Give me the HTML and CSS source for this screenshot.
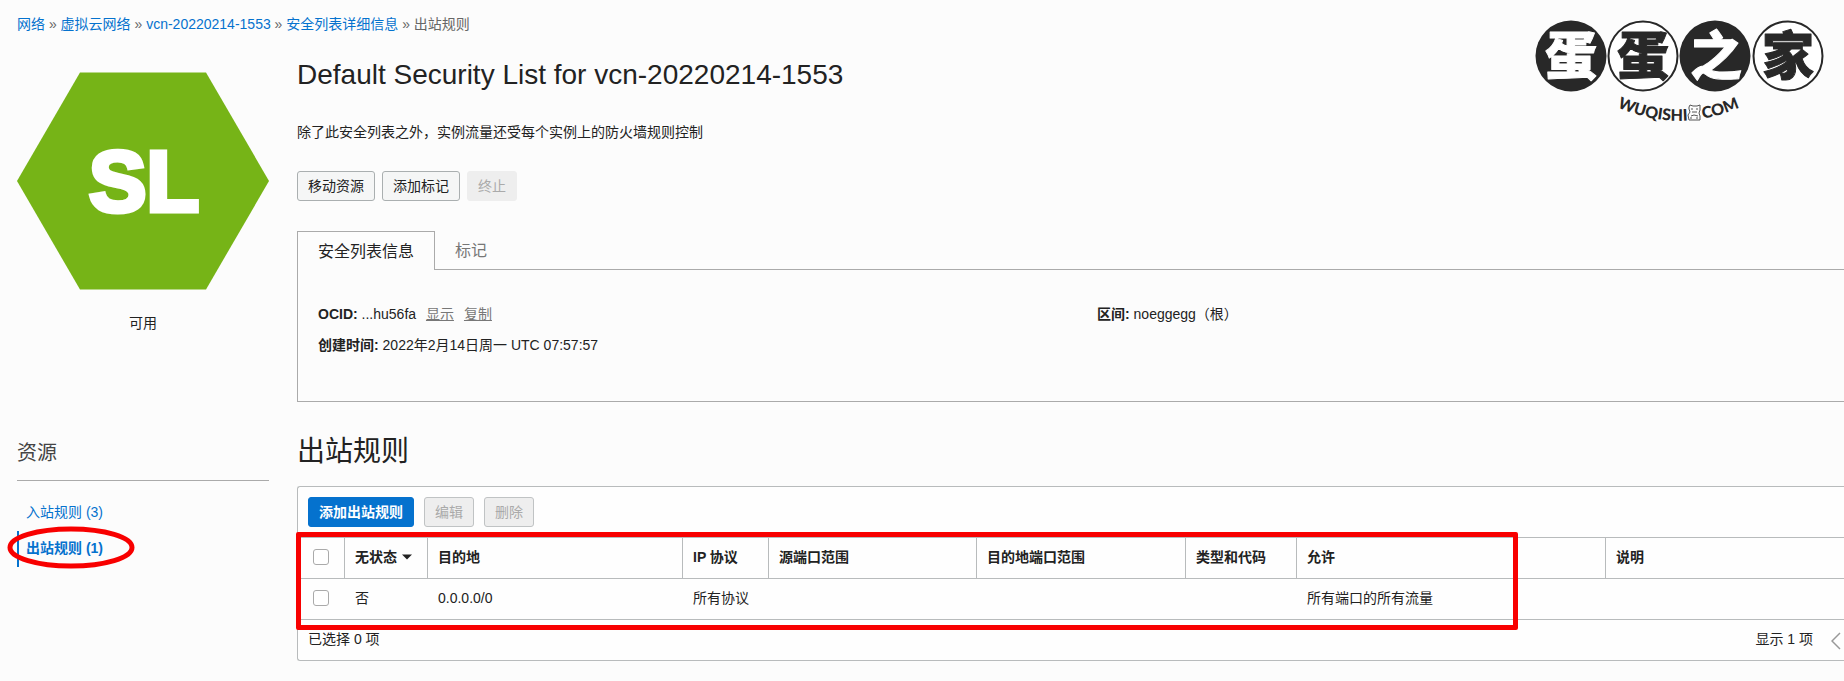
FILE: index.html
```html
<!DOCTYPE html>
<html lang="zh-CN">
<head>
  <meta charset="UTF-8" />
  <title>出站规则</title>
  <link rel="stylesheet" href="styles.css">
</head>
<body>

  <nav class="breadcrumb">
    <a href="#">网络</a> » <a href="#">虚拟云网络</a> » <a href="#">vcn-20220214-1553</a> » <a href="#">安全列表详细信息</a> » <span>出站规则</span>
  </nav>

  <div class="layout">
    <aside class="sidebar">
      <svg class="hexagon" viewBox="0 0 252 218">
        <polygon points="63,0.5 189,0.5 252,109 189,217.5 63,217.5 0,109" />
        <text x="127" y="139">SL</text>
      </svg>
      <div class="status">可用</div>

      <h3 class="resource-title">资源</h3>
      <ul class="resource-list">
        <li><a href="#">入站规则 (3)</a></li>
        <li class="active">
          <a href="#">出站规则 (1)</a>
          <svg class="mark-ellipse" viewBox="0 0 128 43">
            <ellipse cx="64" cy="21.5" rx="61" ry="18.5" />
          </svg>
        </li>
      </ul>
    </aside>

    <main class="content">
      <h1>Default Security List for vcn-20220214-1553</h1>
      <p class="description">除了此安全列表之外，实例流量还受每个实例上的防火墙规则控制</p>

      <div class="actions">
        <button type="button" class="btn">移动资源</button>
        <button type="button" class="btn">添加标记</button>
        <button type="button" class="btn btn-plain" disabled>终止</button>
      </div>

      <div class="tabs" role="tablist">
        <button type="button" class="tab active" role="tab" aria-selected="true">安全列表信息</button>
        <button type="button" class="tab" role="tab" aria-selected="false">标记</button>
      </div>
      <div class="panel">
        <div class="panel-col">
          <div><b>OCID:</b> ...hu56fa <a href="#">显示</a><a href="#">复制</a></div>
          <div><b>创建时间:</b> 2022年2月14日周一 UTC 07:57:57</div>
        </div>
        <div class="panel-col">
          <div><b>区间:</b> noeggegg（根）</div>
        </div>
      </div>

      <h2>出站规则</h2>
      <div class="rules">
        <div class="toolbar">
          <button type="button" class="btn btn-primary">添加出站规则</button>
          <button type="button" class="btn" disabled>编辑</button>
          <button type="button" class="btn" disabled>删除</button>
        </div>

        <div class="table-wrap">
          <table>
            <colgroup>
              <col class="col-check">
              <col class="col-stateless">
              <col class="col-dest">
              <col class="col-protocol">
              <col class="col-source-port">
              <col class="col-dest-port">
              <col class="col-type">
              <col class="col-allow">
              <col>
            </colgroup>
            <thead>
              <tr>
                <th class="check"><input type="checkbox" aria-label="全选"></th>
                <th>无状态<svg class="sort" viewBox="0 0 10 6"><path d="M0 0.5h10L5 5.5z" /></svg></th>
                <th>目的地</th>
                <th>IP 协议</th>
                <th>源端口范围</th>
                <th>目的地端口范围</th>
                <th>类型和代码</th>
                <th>允许</th>
                <th>说明</th>
              </tr>
            </thead>
            <tbody>
              <tr>
                <td class="check"><input type="checkbox" aria-label="选择"></td>
                <td>否</td>
                <td>0.0.0.0/0</td>
                <td>所有协议</td>
                <td></td>
                <td></td>
                <td></td>
                <td>所有端口的所有流量</td>
                <td></td>
              </tr>
            </tbody>
          </table>
          <div class="mark-box"></div>
        </div>

        <div class="table-footer">
          <span>已选择 0 项</span>
          <div class="pager">
            <span>显示 1 项</span>
            <svg viewBox="0 0 10 18"><path d="M9 1L1 9l8 8" /></svg>
          </div>
        </div>
      </div>
    </main>
  </div>

  <svg class="watermark" viewBox="0 -20 290 130">
    <circle class="dark" cx="36" cy="36" r="35.5" />
    <circle class="ring" cx="108" cy="36" r="34.5" />
    <circle class="dark" cx="180" cy="36" r="35.5" />
    <circle class="ring" cx="253" cy="36" r="34.5" />
    <text class="char light" x="36" y="55">蛋</text>
    <text class="char" x="108" y="55">蛋</text>
    <text class="char light" x="181" y="55">之</text>
    <text class="char" x="253" y="55">家</text>
    <path id="arc" class="arc" d="M82 87Q144 115 208 86" />
    <text class="site"><textPath href="#arc" startOffset="0">WUQISHI</textPath></text>
    <text class="site"><textPath href="#arc" startOffset="88">COM</textPath></text>
    <g class="cat">
      <path d="M154 87l1-2 3 1h4l3-1v5l-1 3 1 3v4h-11l-1-5 2-3-1-3z" />
      <path d="M156 89h2M161 89h2M157 92h5M156 96l3-1 4 1M156 99v-2M162 99v-2" />
    </g>
  </svg>

</body>
</html>
```

FILE: styles.css
```css
* {
  box-sizing: border-box;
}

body {
  margin: 0;
  padding: 14px 0 20px 17px;
  position: relative;
  overflow-x: hidden;
  background-color: #fcfcfc;
  color: #222;
  font-family: "Liberation Sans", "Noto Sans CJK SC", sans-serif;
  font-size: 14px;
  line-height: 20px;
}

h1, h2, h3, p, ul {
  margin: 0;
  padding: 0;
  font-weight: normal;
}

a {
  color: #0572ce;
  text-decoration: none;
}

button {
  font-family: inherit;
  cursor: pointer;
}

.breadcrumb {
  color: #666;
}

.layout {
  display: grid;
  grid-template-columns: 252px minmax(0, 1fr);
  column-gap: 28px;
  padding-top: 20px;
}

/* sidebar */
.hexagon {
  display: block;
  width: 100%;
  margin-top: 18px;
}

.hexagon polygon {
  fill: #76b417;
}

.hexagon text {
  fill: #fff;
  stroke: #fff;
  stroke-width: 5;
  font-size: 86px;
  font-weight: bold;
  text-anchor: middle;
}

.status {
  margin-top: 23px;
  text-align: center;
}

.resource-title {
  margin-top: 106px;
  padding-bottom: 13px;
  border-bottom: 1px solid #aaa;
  color: #444;
  font-size: 20px;
  line-height: 28px;
}

.resource-list {
  margin-top: 14px;
  list-style: none;
}

.resource-list li {
  position: relative;
  padding: 0 0 2px 9px;
  line-height: 34px;
}

.resource-list .active {
  padding-left: 7px;
  border-left: 2px solid #0572ce;
  font-weight: bold;
}

.mark-ellipse {
  position: absolute;
  top: -5px;
  left: -12px;
  width: 128px;
  height: 43px;
  pointer-events: none;
}

.mark-ellipse ellipse {
  fill: none;
  stroke: #f80000;
  stroke-width: 5;
}

/* content */
h1 {
  font-size: 28px;
  line-height: 42px;
}

.description {
  margin-top: 26px;
}

.actions {
  display: flex;
  gap: 7px;
  margin-top: 29px;
}

.btn {
  height: 30px;
  padding: 0 10px 2px;
  border: 1px solid #aaafb0;
  border-radius: 3px;
  background-color: #f5f6f6;
  color: #222;
  font-size: 14px;
}

.btn:disabled {
  border-color: #c0c3c4;
  background-color: #eee;
  color: #aaa;
  cursor: default;
}

.btn-plain:disabled {
  border-color: #eee;
}

.btn-primary {
  border-color: #0572ce;
  background-color: #0572ce;
  color: #fff;
  font-weight: bold;
}

.tabs {
  display: flex;
  margin-top: 30px;
}

.tab {
  height: 38px;
  padding: 0 20px 3px;
  border: none;
  background: none;
  color: #777;
  font-size: 16px;
}

.tab.active {
  height: 39px;
  margin-bottom: -1px;
  border: 1px solid #aaa;
  border-bottom: none;
  background-color: #fcfcfc;
  color: #222;
  position: relative;
}

.panel {
  display: grid;
  grid-template-columns: 1fr 1fr;
  column-gap: 32px;
  padding: 29px 0 40px 20px;
  border: 1px solid #aaa;
  border-right: none;
  line-height: 31px;
}

.panel-col a {
  margin-left: 6px;
  color: #777;
  text-decoration: underline;
}

.panel-col a + a {
  margin-left: 10px;
}

h2 {
  margin-top: 30px;
  font-size: 28px;
  line-height: 40px;
}

.rules {
  margin-top: 14px;
  border: 1px solid #b8bbbc;
  border-right: none;
  border-radius: 3px 0 0 3px;
  background-color: #fefefe;
}

.toolbar {
  display: flex;
  gap: 10px;
  padding: 10px;
}

.table-wrap {
  position: relative;
}

table {
  width: 100%;
  table-layout: fixed;
  border-spacing: 0;
  border-top: 1px solid #b8bbbc;
}

th, td {
  height: 41px;
  padding: 0 10px 2px;
  border-bottom: 1px solid #b8bbbc;
  text-align: left;
  white-space: nowrap;
}

th {
  border-right: 1px solid #b8bbbc;
}

th:last-child {
  border-right: none;
}

.check {
  padding: 0 15px 2px;
}

.col-check { width: 47px; }
.col-stateless { width: 83px; }
.col-dest { width: 255px; }
.col-protocol { width: 86px; }
.col-source-port { width: 208px; }
.col-dest-port { width: 209px; }
.col-type { width: 111px; }
.col-allow { width: 309px; }

input[type="checkbox"] {
  display: block;
  appearance: none;
  width: 16px;
  height: 16px;
  margin: 0;
  border: 1px solid #aaa;
  border-radius: 3px;
  background-color: #fff;
}

.sort {
  width: 10px;
  height: 6px;
  margin-left: 5px;
  vertical-align: 2px;
  fill: #222;
}

.mark-box {
  position: absolute;
  top: -5px;
  left: -2px;
  width: 1222px;
  height: 98px;
  border: 5px solid #f80000;
  border-radius: 2px;
  pointer-events: none;
}

.table-footer {
  display: flex;
  justify-content: space-between;
  align-items: center;
  height: 40px;
  padding: 0 3px 2px 10px;
}

.pager {
  display: flex;
  align-items: center;
  gap: 18px;
}

.pager svg {
  width: 10px;
  height: 18px;
  margin-top: 4px;
  fill: none;
  stroke: #999;
  stroke-width: 1.5;
}

/* site logo in the corner */
.watermark {
  position: absolute;
  top: 0;
  right: 19px;
  width: 290px;
  height: 130px;
  fill: #282828;
}

.watermark .ring {
  fill: #fff;
  stroke: #282828;
  stroke-width: 2;
}

.watermark .char {
  font-family: "Noto Sans CJK SC", sans-serif;
  font-size: 52px;
  font-weight: 900;
  text-anchor: middle;
  stroke: #282828;
  stroke-width: 1;
  stroke-linejoin: round;
}

.watermark .light {
  fill: #fff;
  stroke: #fff;
}

.watermark .arc {
  fill: none;
}

.watermark .site {
  font-family: Lato, sans-serif;
  font-size: 16px;
  font-weight: 900;
}

.watermark .cat {
  fill: none;
  stroke: #555;
  stroke-width: 1;
}
```
